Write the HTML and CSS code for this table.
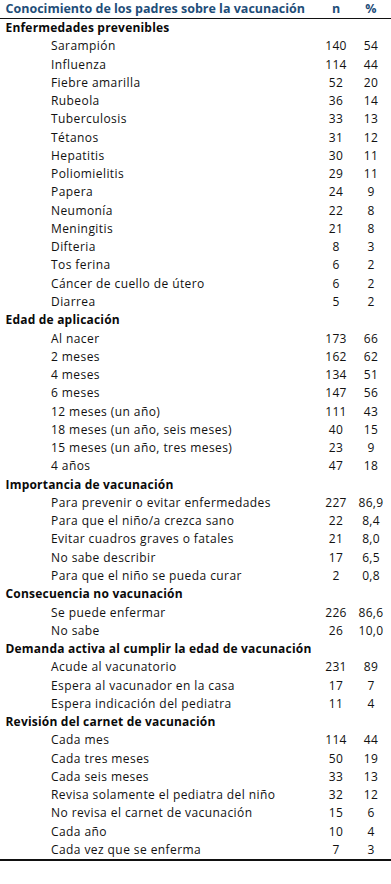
FILE: index.html
```html
<!DOCTYPE html>
<html lang="es">
<head>
<meta charset="utf-8">
<title>Conocimiento de los padres sobre la vacunación</title>
<link rel="stylesheet" href="styles.css">
</head>
<body>
<div class="tbl">
  <div class="row head"><span class="lbl">Conocimiento de los padres sobre la vacunación</span><span class="n">n</span><span class="p">%</span></div>
  <div class="body">
    <div class="row sec"><span class="lbl">Enfermedades prevenibles</span><span class="n"></span><span class="p"></span></div>
    <div class="row item"><span class="lbl">Sarampión</span><span class="n">140</span><span class="p">54</span></div>
    <div class="row item"><span class="lbl">Influenza</span><span class="n">114</span><span class="p">44</span></div>
    <div class="row item"><span class="lbl">Fiebre amarilla</span><span class="n">52</span><span class="p">20</span></div>
    <div class="row item"><span class="lbl">Rubeola</span><span class="n">36</span><span class="p">14</span></div>
    <div class="row item"><span class="lbl">Tuberculosis</span><span class="n">33</span><span class="p">13</span></div>
    <div class="row item"><span class="lbl">Tétanos</span><span class="n">31</span><span class="p">12</span></div>
    <div class="row item"><span class="lbl">Hepatitis</span><span class="n">30</span><span class="p">11</span></div>
    <div class="row item"><span class="lbl">Poliomielitis</span><span class="n">29</span><span class="p">11</span></div>
    <div class="row item"><span class="lbl">Papera</span><span class="n">24</span><span class="p">9</span></div>
    <div class="row item"><span class="lbl">Neumonía</span><span class="n">22</span><span class="p">8</span></div>
    <div class="row item"><span class="lbl">Meningitis</span><span class="n">21</span><span class="p">8</span></div>
    <div class="row item"><span class="lbl">Difteria</span><span class="n">8</span><span class="p">3</span></div>
    <div class="row item"><span class="lbl">Tos ferina</span><span class="n">6</span><span class="p">2</span></div>
    <div class="row item"><span class="lbl">Cáncer de cuello de útero</span><span class="n">6</span><span class="p">2</span></div>
    <div class="row item"><span class="lbl">Diarrea</span><span class="n">5</span><span class="p">2</span></div>

    <div class="row sec"><span class="lbl">Edad de aplicación</span><span class="n"></span><span class="p"></span></div>
    <div class="row item"><span class="lbl">Al nacer</span><span class="n">173</span><span class="p">66</span></div>
    <div class="row item"><span class="lbl">2 meses</span><span class="n">162</span><span class="p">62</span></div>
    <div class="row item"><span class="lbl">4 meses</span><span class="n">134</span><span class="p">51</span></div>
    <div class="row item"><span class="lbl">6 meses</span><span class="n">147</span><span class="p">56</span></div>
    <div class="row item"><span class="lbl">12 meses (un año)</span><span class="n">111</span><span class="p">43</span></div>
    <div class="row item"><span class="lbl">18 meses (un año, seis meses)</span><span class="n">40</span><span class="p">15</span></div>
    <div class="row item"><span class="lbl">15 meses (un año, tres meses)</span><span class="n">23</span><span class="p">9</span></div>
    <div class="row item"><span class="lbl">4 años</span><span class="n">47</span><span class="p">18</span></div>

    <div class="row sec"><span class="lbl">Importancia de vacunación</span><span class="n"></span><span class="p"></span></div>
    <div class="row item"><span class="lbl">Para prevenir o evitar enfermedades</span><span class="n">227</span><span class="p">86,9</span></div>
    <div class="row item"><span class="lbl">Para que el niño/a crezca sano</span><span class="n">22</span><span class="p">8,4</span></div>
    <div class="row item"><span class="lbl">Evitar cuadros graves o fatales</span><span class="n">21</span><span class="p">8,0</span></div>
    <div class="row item"><span class="lbl">No sabe describir</span><span class="n">17</span><span class="p">6,5</span></div>
    <div class="row item"><span class="lbl">Para que el niño se pueda curar</span><span class="n">2</span><span class="p">0,8</span></div>

    <div class="row sec"><span class="lbl">Consecuencia no vacunación</span><span class="n"></span><span class="p"></span></div>
    <div class="row item"><span class="lbl">Se puede enfermar</span><span class="n">226</span><span class="p">86,6</span></div>
    <div class="row item"><span class="lbl">No sabe</span><span class="n">26</span><span class="p">10,0</span></div>

    <div class="row sec"><span class="lbl">Demanda activa al cumplir la edad de vacunación</span><span class="n"></span><span class="p"></span></div>
    <div class="row item"><span class="lbl">Acude al vacunatorio</span><span class="n">231</span><span class="p">89</span></div>
    <div class="row item"><span class="lbl">Espera al vacunador en la casa</span><span class="n">17</span><span class="p">7</span></div>
    <div class="row item"><span class="lbl">Espera indicación del pediatra</span><span class="n">11</span><span class="p">4</span></div>

    <div class="row sec"><span class="lbl">Revisión del carnet de vacunación</span><span class="n"></span><span class="p"></span></div>
    <div class="row item"><span class="lbl">Cada mes</span><span class="n">114</span><span class="p">44</span></div>
    <div class="row item"><span class="lbl">Cada tres meses</span><span class="n">50</span><span class="p">19</span></div>
    <div class="row item"><span class="lbl">Cada seis meses</span><span class="n">33</span><span class="p">13</span></div>
    <div class="row item"><span class="lbl">Revisa solamente el pediatra del niño</span><span class="n">32</span><span class="p">12</span></div>
    <div class="row item"><span class="lbl">No revisa el carnet de vacunación</span><span class="n">15</span><span class="p">6</span></div>
    <div class="row item"><span class="lbl">Cada año</span><span class="n">10</span><span class="p">4</span></div>
    <div class="row item"><span class="lbl">Cada vez que se enferma</span><span class="n">7</span><span class="p">3</span></div>
  </div>
</div>
</body>
</html>
```
FILE: styles.css
```css
html, body {
  margin: 0;
  padding: 0;
  background: #ffffff;
}

body {
  font-family: "Open Sans", "Liberation Sans", sans-serif;
  color: #111111;
  width: 391px;
}

.tbl {
  display: flex;
  flex-direction: column;
  width: 391px;
}

.body {
  display: flex;
  flex-direction: column;
  border-bottom: 2px solid #111111;
}

.row {
  display: flex;
  align-items: center;
  height: 18.28px;
  line-height: 18.28px;
  white-space: nowrap;
}

.lbl {
  flex: 1 1 auto;
}

.n {
  flex: 0 0 36px;
  text-align: center;
}

.p {
  flex: 0 0 34px;
  text-align: center;
  margin-right: 3px;
}

.head {
  height: 18px;
  line-height: 18px;
  border-bottom: 1px solid #111111;
  color: #1f4e79;
  font-weight: 700;
  font-size: 12.5px;
}

.head .lbl,
.sec .lbl {
  padding-left: 5.5px;
}

.sec {
  font-weight: 700;
  font-size: 12px;
  letter-spacing: 0.2px;
  color: #0a0a0a;
}

.item {
  font-size: 12px;
  letter-spacing: 0.42px;
}

.item .lbl {
  padding-left: 51px;
}

.item .n,
.item .p {
  letter-spacing: 0.3px;
}
```
